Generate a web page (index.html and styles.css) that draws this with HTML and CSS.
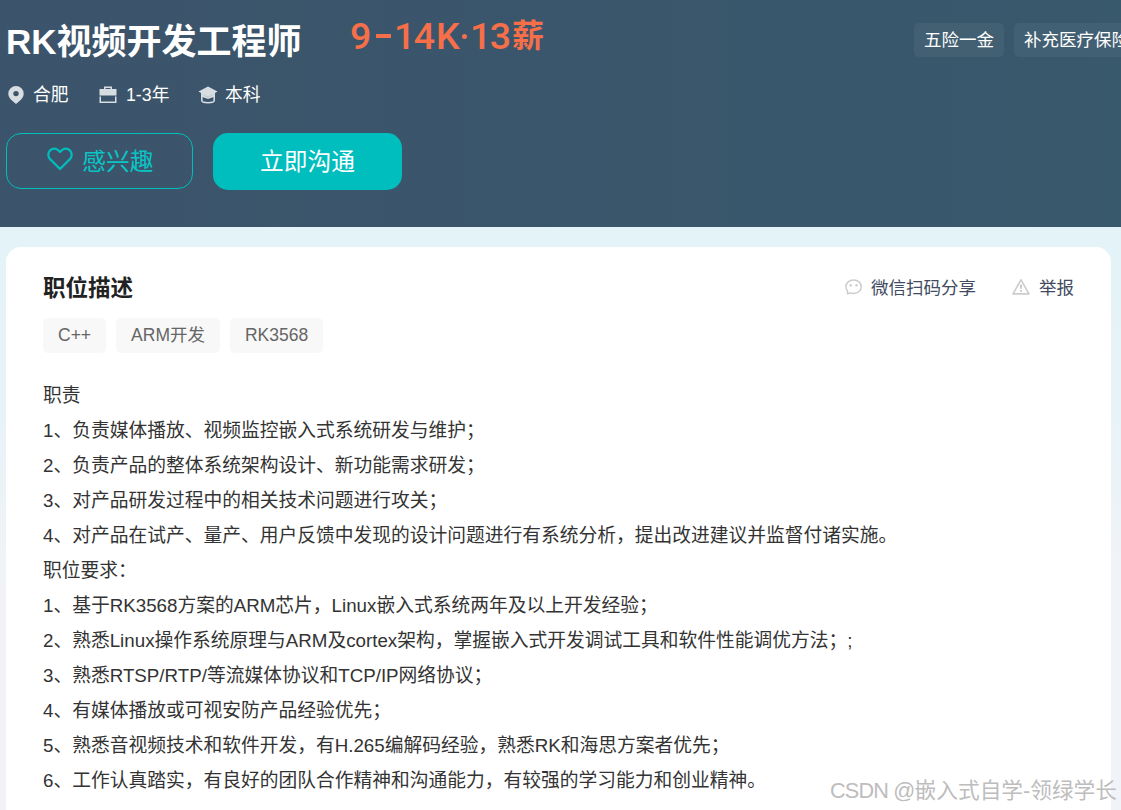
FILE: index.html
```
<!DOCTYPE html>
<html lang="zh-CN">
<head>
    <meta charset="UTF-8">
    <meta name="viewport" content="width=device-width, initial-scale=1.0">
    <title>RK视频开发工程师</title>
    <link rel="stylesheet" href="styles.css">
</head>
<body>
    <header class="job-banner">
        <div class="job-main">
            <div class="job-name">
                <h1>RK视频开发工程师</h1>
                <div class="salary"><span class="s-nine">9</span><span class="s-dash"></span><span class="s-num">14</span><span class="s-k">K</span><span class="s-dot"></span><span class="s-num">13</span><span class="s-cn">薪</span></div>
            </div>
            <div class="job-info">
                <span class="info-item city">
                    <svg width="16" height="18" viewBox="0 0 16 18"><path fill="#d8dde2" fill-rule="evenodd" d="M8 0a7.7 7.7 0 0 1 7.7 7.7c0 3.2-2.2 5.8-4.5 7.6L8 18l-3.2-2.7C2.5 13.5.3 10.9.3 7.7A7.7 7.7 0 0 1 8 0zm0 4.900a2.700 2.700 0 1 0 0 5.400 2.700 2.700 0 0 0 0-5.400z"/></svg>
                    合肥
                </span>
                <span class="info-item years">
                    <svg width="18" height="18" viewBox="0 0 18 18"><path fill="#d8dde2" fill-rule="evenodd" d="M5 3V.5h8V3h4.500v6.500H.5V3zm1.500 0h5V2h-5zM.5 10.500H2v5h14v-5h1.500V17H.5z"/></svg>
                    1-3年
                </span>
                <span class="info-item degree">
                    <svg width="20" height="18" viewBox="0 0 20 18"><path fill="#d8dde2" d="M10 .5 19.500 5.600 10 11.300 .5 5.600zM3 7l7 4.500L17 7v3.500l-7 2.500-7-2.500z"/><path fill="none" stroke="#d8dde2" stroke-width="1.600" d="M3.800 8v6.500c0 3 12.400 3 12.400 0V8"/></svg>
                    本科
                </span>
            </div>
            <div class="job-buttons">
                <a class="btn btn-like">
                    <svg width="26" height="24" viewBox="0 0 26 24"><path fill="none" stroke="#00bebd" stroke-width="2.200" stroke-linejoin="round" d="M13 22 3.100 12.100C.7 9.500.8 5.700 3 3.400c2.300-2.400 6-2.400 8.200-.1L13 5l1.800-1.700c2.200-2.300 5.900-2.300 8.200.1 2.200 2.300 2.300 6.100-.1 8.700z"/></svg>
                    感兴趣
                </a>
                <a class="btn btn-chat">立即沟通</a>
            </div>
        </div>
        <div class="welfare">
            <span>五险一金</span>
            <span>补充医疗保险</span>
        </div>
    </header>

    <main class="job-detail">
        <div class="detail-head">
            <h3>职位描述</h3>
            <div class="detail-op">
                <a class="share">
                    <svg width="17" height="17" viewBox="0 0 17 17"><path fill="none" stroke="#ccc" stroke-width="1.500" stroke-linejoin="round" d="M2.500 15.800V12.800C1.400 11.700.9 10.400.9 8.700c0-4 3.400-6.700 7.700-6.700s7.600 2.700 7.600 6.700-3.300 6.700-7.600 6.700c-1 0-2-.2-2.900-.5z"/><circle cx="5.800" cy="7.300" r="1.200" fill="#ccc"/><circle cx="11.500" cy="7.300" r="1.200" fill="#ccc"/></svg>
                    微信扫码分享
                </a>
                <a class="report">
                    <svg width="18" height="17" viewBox="0 0 18 17"><path fill="none" stroke="#ccc" stroke-width="1.600" stroke-linejoin="round" d="M9 1.800 17 15.900H1z"/><path fill="#ccc" d="M8 6.500h2v4.300H8zm0 5.500h2v1.700H8z"/></svg>
                    举报
                </a>
            </div>
        </div>
        <div class="keywords">
            <span>C++</span>
            <span>ARM开发</span>
            <span>RK3568</span>
        </div>
        <div class="job-text">
            职责<br>
            1、负责媒体播放、视频监控嵌入式系统研发与维护；<br>
            2、负责产品的整体系统架构设计、新功能需求研发；<br>
            3、对产品研发过程中的相关技术问题进行攻关；<br>
            4、对产品在试产、量产、用户反馈中发现的设计问题进行有系统分析，提出改进建议并监督付诸实施。<br>
            职位要求：<br>
            1、基于RK3568方案的ARM芯片，Linux嵌入式系统两年及以上开发经验；<br>
            2、熟悉Linux操作系统原理与ARM及cortex架构，掌握嵌入式开发调试工具和软件性能调优方法；;<br>
            3、熟悉RTSP/RTP/等流媒体协议和TCP/IP网络协议；<br>
            4、有媒体播放或可视安防产品经验优先；<br>
            5、熟悉音视频技术和软件开发，有H.265编解码经验，熟悉RK和海思方案者优先；<br>
            6、工作认真踏实，有良好的团队合作精神和沟通能力，有较强的学习能力和创业精神。
        </div>
    </main>
    <div class="watermark"><span>CSDN @</span>嵌入式自学-领绿学长</div>
</body>
</html>
```
FILE: styles.css
```
* {
    box-sizing: border-box;
}
body {
    margin: 0;
    height: 810px;
    overflow: hidden;
    position: relative;
    font-family: "Liberation Sans", "Noto Sans CJK SC", sans-serif;
    text-spacing-trim: space-all;
    background: linear-gradient(#e3f3f7 227px, #e7f3f7 400px, #f2f3f8 600px);
}
h1, h3 {
    margin: 0;
}
svg {
    flex: none;
}

/* banner */
.job-banner {
    display: flex;
    justify-content: space-between;
    height: 227px;
    padding-left: 6px;
    background: linear-gradient(90deg, #3c546b, #38586c);
}
.job-name {
    display: flex;
    height: 82px;
}
.job-name h1 {
    width: 344px;
    line-height: 84px;
    font-size: 35px;
    color: #fff;
    white-space: nowrap;
}
.salary {
    display: flex;
    align-items: center;
    height: 72px;
    font-family: Roboto, "Noto Sans CJK SC", sans-serif;
    font-size: 37.5px;
    font-weight: 500;
    line-height: 72px;
    color: #f76f49;
}
.s-nine {
    width: 26px;
}
.s-dash {
    width: 15px;
    height: 4px;
    margin-right: 3px;
    background: #f76f49;
}
.s-num {
    width: 42px;
    letter-spacing: -1.5px;
}
.s-k {
    width: 26px;
}
.s-dot {
    width: 5px;
    height: 5px;
    margin-right: 3px;
    border-radius: 50%;
    background: #f76f49;
}
.s-cn {
    font-size: 32px;
    font-weight: bold;
}
.job-info {
    display: flex;
    height: 26px;
    font-size: 17.75px;
    line-height: 26px;
    color: #fff;
}
.info-item {
    display: flex;
    align-items: center;
}
.city {
    width: 93px;
    padding-left: 2px;
    gap: 9px;
}
.years {
    width: 99px;
    gap: 9px;
}
.degree {
    gap: 7px;
}
.job-buttons {
    display: flex;
    gap: 20px;
    margin-top: 25px;
}
.btn {
    display: flex;
    align-items: center;
    justify-content: center;
    padding-bottom: 4px;
    border-radius: 15px;
    font-size: 23.75px;
}
.btn-like {
    width: 187px;
    height: 56px;
    padding-left: 2px;
    gap: 9px;
    border: 1px solid #00bebd;
    color: #08c6c5;
}
.btn-chat {
    width: 189px;
    height: 57px;
    background: #00bebd;
    color: #fff;
}
.welfare {
    display: flex;
    gap: 10px;
    width: 207px;
    padding-top: 23px;
    overflow: hidden;
}
.welfare span {
    flex: none;
    height: 34px;
    padding: 0 10px;
    border-radius: 5px;
    font-size: 17.5px;
    line-height: 34px;
    color: #fff;
    background: rgba(255, 255, 255, 0.05);
}

/* job description */
.job-detail {
    margin: 20px 10px 0 6px;
    height: 600px;
    padding: 21px 37px 0;
    border-radius: 15px;
    background: #fff;
}
.detail-head {
    display: flex;
    justify-content: space-between;
    align-items: center;
    height: 36px;
}
.detail-head h3 {
    font-size: 22.5px;
    color: #222;
}
.detail-op {
    display: flex;
    gap: 36px;
    font-size: 17.5px;
    color: #414a60;
}
.detail-op a {
    display: flex;
    align-items: center;
    gap: 9px;
}
.keywords {
    display: flex;
    gap: 10px;
    margin-top: 14px;
}
.keywords span {
    height: 35px;
    padding: 0 15px;
    border-radius: 5px;
    font-size: 17.5px;
    line-height: 34px;
    color: #666;
    background: #f8f8f8;
}
.job-text {
    margin-top: 25px;
    font-size: 18.75px;
    line-height: 35px;
    color: #333;
    white-space: nowrap;
}
.watermark {
    position: absolute;
    right: 4px;
    bottom: 3px;
    font-size: 21.7px;
    line-height: 32px;
    color: #bdbdbd;
}
.watermark span {
    letter-spacing: -0.8px;
}
```
